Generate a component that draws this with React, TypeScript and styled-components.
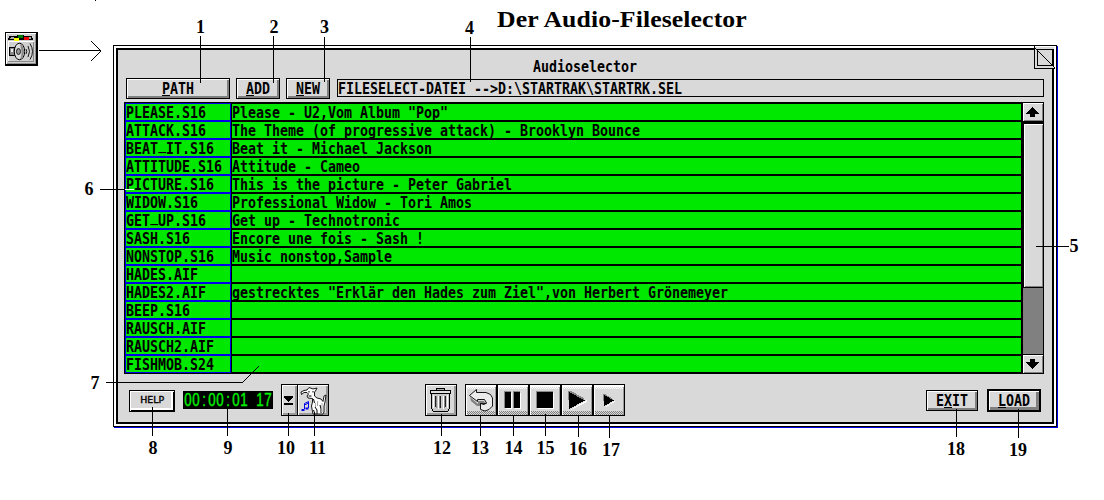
import React from "react";
import styled, { createGlobalStyle, css } from "styled-components";

const GREY = "#d9d9d9";
const GREEN = "#00e800";
const BLUE = "#0000e8";

const GlobalStyle = createGlobalStyle`
  *, *::before, *::after { box-sizing: border-box; }
  body { margin: 0; background: #fff; color: #000; overflow: hidden; }
`;

const Page = styled.main`
  position: relative;
  display: grid;
  grid-template: 45px 1fr / 113px 944px;
  width: 1104px;
  height: 500px;
  background: #fff;
`;

const Heading = styled.h1`
  grid-column: 1 / -1;
  margin: 0 0 0 497px;
  padding: 5px 0 0;
  font: bold 24px/28px "Liberation Serif", serif;
  letter-spacing: 0.1px;
  white-space: nowrap;
  transform: scaleX(1.072);
  transform-origin: 0 0;
`;

const Rail = styled.div`
  margin: -13px 0 0 5px;
`;

const Frame = styled.section`
  height: 382px;
  padding: 2px;
  border: 1px solid #000;
  background: #fff;
  box-shadow: 1px 1px 0 ${BLUE};
`;

const Panel = styled.div`
  position: relative;
  height: 100%;
  padding: 8px 8px 0 6px;
  border: 2px solid #000;
  background: ${GREY};
`;

const Mono = styled.span<{ $chars: number }>`
  display: block;
  flex: none;
  width: ${(p) => p.$chars * 8}px;
  height: 16px;
  font: bold 16.5px/18px "DejaVu Sans Mono", monospace;
  white-space: pre;
  transform: scaleX(0.8053);
  transform-origin: 0 0;
`;

const Hotkey = styled.span`
  text-decoration: underline;
  text-decoration-thickness: 1px;
  text-underline-offset: 1px;
`;

const Underscore = styled.span`
  display: inline-block;
  width: 9.93px;
  font-size: 9px;
  line-height: 10px;
  transform: translateY(-3px) scale(1.83, 1.4);
  transform-origin: 0 100%;
`;

/* The system font sets its underscore higher than usual. */
function withUnderscores(text: string) {
  return text
    .split(/(_)/)
    .map((part, i) => (part === "_" ? <Underscore key={i}>_</Underscore> : part));
}

function Label({ text, hot }: { text: string; hot?: number }) {
  if (hot === undefined) return <Mono $chars={text.length}>{withUnderscores(text)}</Mono>;
  return (
    <Mono $chars={text.length}>
      {text.slice(0, hot)}
      <Hotkey>{text[hot]}</Hotkey>
      {text.slice(hot + 1)}
    </Mono>
  );
}

const TitleRow = styled.header`
  display: flex;
  height: 16px;
  padding-left: 409px;
`;

const Toolbar = styled.div`
  display: flex;
  align-items: flex-start;
  gap: 6px;
  height: 21px;
  margin: 4px 0 3px 2px;
`;

const Button = styled.button<{ $w: number }>`
  display: flex;
  justify-content: center;
  width: ${(p) => p.$w}px;
  height: 21px;
  padding: 1px 0 0;
  border: 1px solid #000;
  border-radius: 0;
  color: #000;
  text-align: left;
  background: ${GREY};
  box-shadow: inset 1px 1px 0 #fff, inset -2px -2px 0 #808080;
`;

const LoadButton = styled(Button)`
  height: 23px;
  border-width: 2px;
  box-shadow: inset 1px 1px 0 #fff, inset -3px -3px 0 #808080;
`;

const HelpButton = styled.button`
  width: 46px;
  height: 22px;
  padding: 0;
  border: 1px solid #000;
  background: ${GREY};
  color: #000;
  box-shadow: inset 1px 1px 0 #fff, inset -1px -1px 0 #000, inset -3px -3px 0 #fff;
  font: 8px/18px "DejaVu Sans", sans-serif;
  -webkit-text-stroke: 0.3px #000;
`;

const Wide = styled.span`
  display: inline-block;
  transform: scaleX(1.18);
`;

const PathField = styled.div`
  flex: none;
  width: 707px;
  height: 18px;
  margin: 1px 0 0 1px;
  border: 1px solid #000;
`;

const Browser = styled.div`
  display: grid;
  grid-template-columns: 898px 22px;
  height: 272px;
`;

const List = styled.div`
  border: 1px solid #000;
  background: ${GREEN};
`;

const Row = styled.div`
  display: grid;
  grid-template-columns: 106px 1fr;
  height: 18px;
`;

const FileName = styled.div`
  border: 1px solid ${BLUE};
`;

const Description = styled.div`
  border: 1px solid #000;
  border-right: 0;
`;

const Scrollbar = styled.div`
  display: flex;
  flex-direction: column;
  border: 1px solid #000;
  background: #000;
`;

const bevel = css`
  background: ${GREY};
  box-shadow: inset 1px 1px 0 #fff, inset -1px -1px 0 #808080;
`;

const ArrowButton = styled.div`
  ${bevel}
  height: 18px;
`;

const Thumb = styled.div`
  ${bevel}
  height: 163px;
  margin: 3px 0 1px 1px;
`;

const Track = styled.div`
  height: 66px;
  margin-bottom: 1px;
  background: #808080;
`;

const Footer = styled.footer`
  display: flex;
  align-items: flex-start;
  height: 32px;
  margin: 10px 0 0 5px;
`;

const Clock = styled.div`
  display: flex;
  width: 90px;
  height: 18px;
  margin-left: 8px;
  padding-left: 1px;
  background: #000;
`;

const Digit = styled.span`
  display: flex;
  justify-content: center;
  width: 8px;
  font: 17.5px/19px "Liberation Sans", sans-serif;
  color: #00f000;
  -webkit-text-stroke: 0.4px #00f000;
  transform: scaleX(0.76);
`;

const IconButton = styled.div<{ $w?: number; $joined?: boolean; $dither?: boolean }>`
  flex: none;
  width: ${(p) => p.$w ?? 32}px;
  height: 32px;
  margin-left: ${(p) => (p.$joined ? -1 : 0)}px;
  border: 1px solid #000;
  background: ${GREY};
  box-shadow: inset 1px 1px 0 #fff, inset -2px -2px 0 #999;
  ${(p) =>
    p.$dither &&
    css`
      background:
        repeating-conic-gradient(#fff 0 25%, ${GREY} 0 50%) 0 2px / 2px 2px repeat-x,
        repeating-conic-gradient(#808080 0 25%, ${GREY} 0 50%) 0 26px / 2px 2px repeat-x,
        repeating-conic-gradient(#808080 0 25%, ${GREY} 0 50%) 0 28px / 2px 2px repeat-x,
        ${GREY};
      box-shadow: inset 1px 2px 0 #fff, inset -1px 0 0 #999;
    `}
  svg { display: block; }
`;

const Gap = styled.div<{ $w: number }>`
  flex: none;
  width: ${(p) => p.$w}px;
`;

const Offset = styled.div<{ $top: number }>`
  padding-top: ${(p) => p.$top}px;
`;

const Corner = styled.svg`
  position: absolute;
  top: -4px;
  right: -4px;
`;

const Overlay = styled.svg`
  position: absolute;
  inset: 0;
  pointer-events: none;
`;

const Callout = styled.span<{ $x: number; $y: number }>`
  position: absolute;
  left: ${(p) => p.$x - 15}px;
  top: ${(p) => p.$y - 16}px;
  width: 30px;
  text-align: center;
  font: bold 18px/20px "Liberation Serif", serif;
`;

const files: [string, string][] = [
  ["PLEASE.S16", 'Please - U2,Vom Album "Pop"'],
  ["ATTACK.S16", "The Theme (of progressive attack) - Brooklyn Bounce"],
  ["BEAT_IT.S16", "Beat it - Michael Jackson"],
  ["ATTITUDE.S16", "Attitude - Cameo"],
  ["PICTURE.S16", "This is the picture - Peter Gabriel"],
  ["WIDOW.S16", "Professional Widow - Tori Amos"],
  ["GET_UP.S16", "Get up - Technotronic"],
  ["SASH.S16", "Encore une fois - Sash !"],
  ["NONSTOP.S16", "Music nonstop,Sample"],
  ["HADES.AIF", ""],
  ["HADES2.AIF", 'gestrecktes "Erklär den Hades zum Ziel",von Herbert Grönemeyer'],
  ["BEEP.S16", ""],
  ["RAUSCH.AIF", ""],
  ["RAUSCH2.AIF", ""],
  ["FISHMOB.S24", ""],
];

const callouts: [number, number, number][] = [
  [1, 200.5, 33], [2, 274, 33], [3, 324.5, 33], [4, 469.5, 34],
  [5, 1074, 252], [6, 89, 195], [7, 95, 389], [8, 153, 454],
  [9, 228, 454], [10, 286, 454], [11, 317.5, 454], [12, 442, 454],
  [13, 480, 454], [14, 513.5, 454], [15, 545.5, 454], [16, 578, 455],
  [17, 611, 456], [18, 956, 455], [19, 1018, 456],
];

const leaders =
  "M200.5 36V83M273.5 36V83M324.5 37V82M470.5 37V82M1036 246.5H1069M100 189.5H125" +
  "M106 382.5H243M152.5 407V436M227.5 409V436M288.5 413V436M314.5 413V436" +
  "M441.5 414V436M480.5 416V436M513.5 416V436M545.5 414V436M578.5 416V437" +
  "M609.5 416V438M956.5 409V437M1018.5 409V438M39 50.5H101M95.5 0V1";

function SpeakerIcon() {
  return (
    <svg width="33" height="34" viewBox="0 0 33 34" display="block">
      <g shapeRendering="crispEdges">
        <path d="M0 0H33V34H0Z" />
        <path d="M1 1H31V32H1Z" fill="#fff" />
        <path d="M2 2H31V32H2Z" fill="#d0d0d0" />
        <path d="M30 2H31V32H2V31H30Z" fill="#909090" />
        <path d="M4 4H12V3H19V4H27L28 8H3V6H4Z" />
        <path d="M6 5H9V7H5Z" fill="#aaa" />
        <path d="M24 5H26V7H24Z" fill="#aaa" />
        <path d="M13 3H18V6H13Z" fill="#008000" />
        <path d="M9 6H14V9H9Z" fill="#ffff00" />
        <path d="M19 5H24V8H19Z" fill="#f00000" />
        <path d="M3 9H29V10H3ZM3 9H4V29H3Z" fill="#fff" />
        <path d="M28 10H29V30H3V29H28Z" fill="#888" />
        <path d="M4.500 15.500H9.500V23.500H4.500Z" fill="#888" stroke="#000" />
        <path d="M6 17H8V20H6Z" fill="#eee" />
      </g>
      <ellipse cx="14.500" cy="19.500" rx="5.200" ry="8.300" fill="#ddd" stroke="#000" />
      <path d="M15 12Q19 14 19 20Q18 27 14.500 27.500Q17 24 16.500 19Z" fill="#888" />
      <ellipse cx="13.500" cy="19.500" rx="2" ry="3" fill="#999" stroke="#000" strokeWidth="0.8" />
      <g fill="none" stroke="#000" strokeWidth="0.9">
        <path d="M21 17Q22.500 19.500 21 22M23 14Q26 19.500 23 25M25 11.500Q30 19.500 25 27.500" />
      </g>
    </svg>
  );
}

function TrashIcon() {
  return (
    <svg width="30" height="30" viewBox="1 1 30 30" shapeRendering="crispEdges">
      <path d="M6.500 8.500V24.500L8.500 27.500H22.500L24.500 24.500V8.500Z" fill="#c8c8c8" stroke="#000" />
      <path d="M5.500 6.500H25.500V9.500H5.500Z" fill="#ddd" stroke="#000" />
      <path d="M11.500 6.500V4.500H19.500V6.500Z" fill="#aaa" stroke="#000" />
      <path d="M8.500 11V24M13.500 12V25M18.500 12V25M22.500 11V24" stroke="#fff" />
      <path d="M10.500 12V23M15.500 12V24M20.500 12V23" stroke="#222" />
      <path d="M11.500 12V24M14.500 12V24M19.500 12V24" stroke="#888" />
    </svg>
  );
}

function UndoIcon() {
  return (
    <svg width="30" height="30" viewBox="1 1 30 30">
      <path d="M5 13L13 20V17H19L20 19H16V22L12 22L6 17Z" fill="#808080" />
      <path
        d="M4.500 11.500L11.500 5.500V8.500H21L25.500 10.500L27.500 14V22L24 25.500L20 27L15.500 25.500V19.500L19 20.500L21.500 19L19.500 15.500H12.500V17.500Z"
        fill="#ececec"
        stroke="#000"
        strokeWidth="0.9"
      />
      <path d="M15.500 19.500H21.500" stroke="#000" strokeWidth="0.8" />
    </svg>
  );
}

function DogIcon() {
  return (
    <svg width="30" height="30" viewBox="1 1 30 30">
      <path
        d="M4.500 10.500L4 8L7 6.500L10 6L12 3.500L16 5L20 4L18.500 7L17.500 8V12L20 14L24 15L26 17.500L27 12L29 11L28 18L27 22V28L26 30H16L15 25L14.500 22L15.500 18V14.500L11 14L10 12L11.500 10L10 8.500L7 8.500Z"
        fill="#fff"
        stroke="#000"
        strokeWidth="0.9"
      />
      <path
        d="M12 7V8.500M16 7V8.500M11.500 12H14.500M16.500 15L17.500 19M18 23L20 26V30M23 21L24 25V29M16.500 26L18 30"
        fill="none"
        stroke="#000"
      />
      <path d="M20.500 17V22M18.500 19V23M25 19V28" stroke="#aaa" />
      <path d="M7.500 25V19.500L11.500 17.500V24M7.500 21L11.500 19" fill="none" stroke={BLUE} />
      <path d="M4.500 25H7.500V27H4.500ZM8.500 23.500H11.500V25.500H8.500Z" fill={BLUE} />
    </svg>
  );
}

export default function App() {
  return (
    <Page>
      <GlobalStyle />
      <Heading>Der Audio-Fileselector</Heading>
      <Rail>
        <SpeakerIcon />
      </Rail>
      <Frame>
        <Panel>
          <TitleRow>
            <Label text="Audioselector" />
          </TitleRow>
          <Toolbar>
            <Button $w={104}><Label text="PATH" hot={0} /></Button>
            <Button $w={44}><Label text="ADD" hot={0} /></Button>
            <Button $w={44}><Label text="NEW" hot={0} /></Button>
            <PathField>
              <Label text="FILESELECT-DATEI -->D:\STARTRAK\STARTRK.SEL" />
            </PathField>
          </Toolbar>
          <Browser>
            <List>
              {files.map(([name, text]) => (
                <Row key={name}>
                  <FileName><Label text={name} /></FileName>
                  <Description><Label text={text} /></Description>
                </Row>
              ))}
            </List>
            <Scrollbar>
              <ArrowButton>
                <svg width="20" height="18" shapeRendering="crispEdges" display="block">
                  <path d="M9 4H10V5H11V6H12V7H13V8H14V9H15V10H16V11H12V14H7V11H3V10H4V9H5V8H6V7H7V6H8V5H9Z" />
                </svg>
              </ArrowButton>
              <Thumb />
              <Track />
              <ArrowButton>
                <svg width="20" height="18" shapeRendering="crispEdges" display="block">
                  <path d="M7 4H12V7H16V8H15V9H14V10H13V11H12V12H11V13H10V14H9V13H8V12H7V11H6V10H5V9H4V8H3V7H7Z" />
                </svg>
              </ArrowButton>
            </Scrollbar>
          </Browser>
          <Footer>
            <Offset $top={5}><HelpButton><Wide>HELP</Wide></HelpButton></Offset>
            <Offset $top={7}>
              <Clock>
                {"00:00:01 17".split("").map((c, i) => <Digit key={i}>{c}</Digit>)}
              </Clock>
            </Offset>
            <Gap $w={8} />
            <IconButton $w={17}>
              <svg width="15" height="30" shapeRendering="crispEdges">
                <path d="M2 11H11V13H10V14H9V15H8V16H7V17H6V16H5V15H4V14H3V13H2ZM2 18H11V20H2Z" />
              </svg>
            </IconButton>
            <IconButton $joined><DogIcon /></IconButton>
            <Gap $w={96} />
            <IconButton><TrashIcon /></IconButton>
            <Gap $w={8} />
            <IconButton $dither><UndoIcon /></IconButton>
            <IconButton $dither>
              <svg width="30" height="30" shapeRendering="crispEdges">
                <path d="M6 6H13V23H6ZM15 6H22V23H15Z" fill="#888" />
                <path d="M8 8H14V24H8ZM17 8H23V24H17Z" fill="#fff" />
                <path d="M7 7H13V23H7ZM16 7H22V23H16Z" />
              </svg>
            </IconButton>
            <IconButton $dither>
              <svg width="30" height="30" shapeRendering="crispEdges">
                <path d="M6 6H23V23H6Z" fill="#888" />
                <path d="M8 8H24V24H8Z" fill="#fff" />
                <path d="M7 7H23V23H7Z" />
              </svg>
            </IconButton>
            <IconButton $dither>
              <svg width="30" height="30" shapeRendering="crispEdges">
                <path d="M6 6H9L22 13V15H6Z" fill="#888" />
                <path d="M8 25L25 15V17L9 25Z" fill="#fff" />
                <path d="M7 7L23 15.500L7 24Z" />
              </svg>
            </IconButton>
            <IconButton $dither>
              <svg width="30" height="30" shapeRendering="crispEdges">
                <path d="M9 9H11L19 14V16H9Z" fill="#888" />
                <path d="M11 22L21 16V17L12 22Z" fill="#fff" />
                <path d="M10 10L20 15.500L10 21Z" />
              </svg>
            </IconButton>
            <Gap $w={301} />
            <Offset $top={6}><Button $w={52}><Label text="EXIT" hot={1} /></Button></Offset>
            <Gap $w={9} />
            <Offset $top={5}><LoadButton $w={54}><Label text="LOAD" hot={0} /></LoadButton></Offset>
          </Footer>
          <Corner width="22" height="23" viewBox="0 0 22 23" shapeRendering="crispEdges">
            <path d="M0 1H20V22H0Z" fill={GREY} />
            <path d="M0.500 0V22.500H21M3.500 3V19.500H19M1 2L21 22" fill="none" stroke="#000" />
            <path d="M3 3H20V4H3ZM18 3H20V20H18Z" />
          </Corner>
        </Panel>
      </Frame>
      <Overlay width="1104" height="500" shapeRendering="crispEdges">
        <path d={leaders} stroke="#000" />
        <path d="M243 382L259 366M91 41L101 51L91 61" fill="none" stroke="#000" />
        <path d="M125 189.500H134" stroke="#fff" />
      </Overlay>
      {callouts.map(([n, x, y]) => (
        <Callout key={n} $x={x} $y={y}>{n}</Callout>
      ))}
    </Page>
  );
}
